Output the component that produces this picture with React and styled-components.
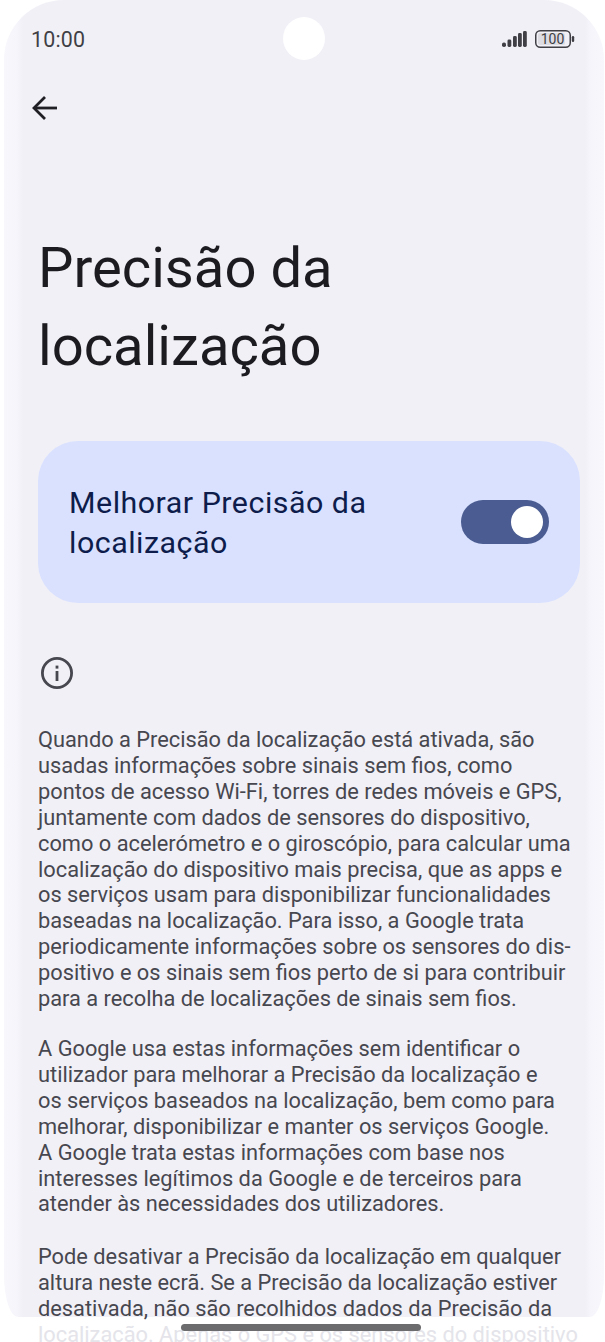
import React from 'react';
import styled, { createGlobalStyle } from 'styled-components';

const GlobalStyle = createGlobalStyle`
  html, body {
    margin: 0;
    padding: 0;
    background: #fff;
  }
  body {
    font-family: Roboto, "Noto Sans", sans-serif;
  }
`;

const Page = styled.div`
  position: relative;
  width: 605px;
  height: 1342px;
  overflow: hidden;
  background: #fff;
`;

const Screen = styled.div`
  height: 1317px;
  margin: 0 1px 0 4px;
  padding: 0 24px 0 34px;
  border-radius: 60px 60px 14px 14px / 60px 60px 42px 42px;
  background: linear-gradient(90deg, #f7f7fc 0, #f5f5fb 13px, #f1f0f7 19px, #f1f0f7 calc(100% - 19px), #f5f5fb calc(100% - 13px), #f7f7fc 100%);
`;

const StatusBar = styled.div`
  height: 78px;
  margin-left: -7px;
  margin-right: 5px;
  display: flex;
  align-items: center;
  justify-content: space-between;
`;

const Clock = styled.span`
  font-size: 21.4px;
  color: #3f3f45;
  letter-spacing: 0.2px;
`;

const Camera = styled.div`
  position: absolute;
  left: 283px;
  top: 17px;
  width: 42px;
  height: 43px;
  border-radius: 50%;
  background: #fff;
`;

const StatusIcons = styled.div`
  display: flex;
  align-items: center;
  gap: 8px;
`;

const BackRow = styled.div`
  height: 60px;
  margin-left: -7px;
  display: flex;
  align-items: center;
`;

const Title = styled.h1`
  margin: 91px 0 0;
  font-size: 56.2px;
  line-height: 78px;
  font-weight: 400;
  color: #1b1b20;
`;

const ToggleCard = styled.div`
  margin-top: 56px;
  height: 162px;
  box-sizing: border-box;
  padding: 2px 31px 0 31px;
  border-radius: 40px;
  background: #d9e1fe;
  display: flex;
  align-items: center;
  justify-content: space-between;
`;

const ToggleLabel = styled.div`
  width: 340px;
  font-size: 30.4px;
  line-height: 40px;
  letter-spacing: 0.5px;
  color: #0d1c4b;
`;

const Switch = styled.div`
  width: 88px;
  height: 44px;
  margin-top: -2px;
  box-sizing: border-box;
  padding-right: 6px;
  border-radius: 22px;
  background: #4a5c91;
  display: flex;
  align-items: center;
  justify-content: flex-end;
`;

const Knob = styled.div`
  width: 32px;
  height: 32px;
  border-radius: 50%;
  background: #fff;
`;

const InfoRow = styled.div`
  margin-top: 52px;
  margin-left: 2px;
  height: 36px;
  display: flex;
  align-items: center;
`;

const Body = styled.div`
  margin-top: 36px;
  display: flex;
  flex-direction: column;
  gap: 24px;
`;

const Paragraph = styled.p`
  margin: ${(props) => props.$top || 0}px 0 0;
  font-size: 21.8px;
  line-height: 25.9px;
  color: #47474f;
  white-space: nowrap;
`;

const FadedLine = styled.span`
  color: #e4e4ea;
`;

const HomeBar = styled.div`
  position: absolute;
  left: 181px;
  top: 1324px;
  width: 240px;
  height: 7px;
  border-radius: 4px;
  background: #6c6c6f;
`;

const paragraphs = [
  [
    'Quando a Precisão da localização está ativada, são',
    'usadas informações sobre sinais sem fios, como',
    'pontos de acesso Wi-Fi, torres de redes móveis e GPS,',
    'juntamente com dados de sensores do dispositivo,',
    'como o acelerómetro e o giroscópio, para calcular uma',
    'localização do dispositivo mais precisa, que as apps e',
    'os serviços usam para disponibilizar funcionalidades',
    'baseadas na localização. Para isso, a Google trata',
    'periodicamente informações sobre os sensores do dis-',
    'positivo e os sinais sem fios perto de si para contribuir',
    'para a recolha de localizações de sinais sem fios.',
  ],
  [
    'A Google usa estas informações sem identificar o',
    'utilizador para melhorar a Precisão da localização e',
    'os serviços baseados na localização, bem como para',
    'melhorar, disponibilizar e manter os serviços Google.',
    'A Google trata estas informações com base nos',
    'interesses legítimos da Google e de terceiros para',
    'atender às necessidades dos utilizadores.',
  ],
  [
    'Pode desativar a Precisão da localização em qualquer',
    'altura neste ecrã. Se a Precisão da localização estiver',
    'desativada, não são recolhidos dados da Precisão da',
  ],
];

const SignalIcon = () => (
  <svg width="25" height="16" viewBox="0 0 25 16" fill="#3f3f45">
    <rect x="0" y="11.5" width="4" height="4.5" rx="1.8" />
    <rect x="5.5" y="8.5" width="3.8" height="7.5" rx="1.4" />
    <rect x="11" y="5" width="3.8" height="11" rx="1.4" />
    <rect x="16" y="2" width="3.8" height="14" rx="1.4" />
    <rect x="21" y="0" width="3.8" height="16" rx="1.4" />
  </svg>
);

const BatteryIcon = () => (
  <svg width="40" height="18" viewBox="0 0 40 18">
    <rect x="0.75" y="0.75" width="34.5" height="16.5" rx="4.5" fill="none" stroke="#3f3f45" strokeWidth="1.5" />
    <rect x="3" y="3" width="27" height="12" rx="2" fill="#dcdce2" />
    <text x="17.5" y="14" textAnchor="middle" fontFamily="Roboto, sans-serif" fontSize="14" fill="#3f3f45">100</text>
    <rect x="36.8" y="6" width="2.4" height="6" rx="1.2" fill="#3f3f45" />
  </svg>
);

const BackArrow = () => (
  <svg width="28" height="28" viewBox="0 0 28 28" fill="none" stroke="#1f1f24" strokeWidth="2.8">
    <path d="M26 14H3" />
    <path d="M14 3 3 14l11 11" />
  </svg>
);

const InfoIcon = () => (
  <svg width="34" height="34" viewBox="0 0 34 34" fill="none">
    <circle cx="17" cy="17" r="14.6" stroke="#47474f" strokeWidth="2.8" />
    <rect x="15.6" y="15" width="2.8" height="10" fill="#47474f" />
    <rect x="15.6" y="9.6" width="2.8" height="3" fill="#47474f" />
  </svg>
);

const App = () => {
  return (
    <Page>
      <GlobalStyle />
      <Screen>
        <StatusBar>
          <Clock>10:00</Clock>
          <StatusIcons>
            <SignalIcon />
            <BatteryIcon />
          </StatusIcons>
        </StatusBar>
        <BackRow>
          <BackArrow />
        </BackRow>
        <Title>Precisão da<br />localização</Title>
        <ToggleCard>
          <ToggleLabel>Melhorar Precisão da localização</ToggleLabel>
          <Switch><Knob /></Switch>
        </ToggleCard>
        <InfoRow>
          <InfoIcon />
        </InfoRow>
        <Body>
          {paragraphs.map((lines, i) => (
            <Paragraph key={i} $top={i === 2 ? 3 : 0}>
              {lines.map((line, j) => (
                <React.Fragment key={j}>{line}<br /></React.Fragment>
              ))}
              {i === 2 && <FadedLine>localização. Apenas o GPS e os sensores do dispositivo</FadedLine>}
            </Paragraph>
          ))}
        </Body>
      </Screen>
      <Camera />
      <HomeBar />
    </Page>
  );
};

export default App;
